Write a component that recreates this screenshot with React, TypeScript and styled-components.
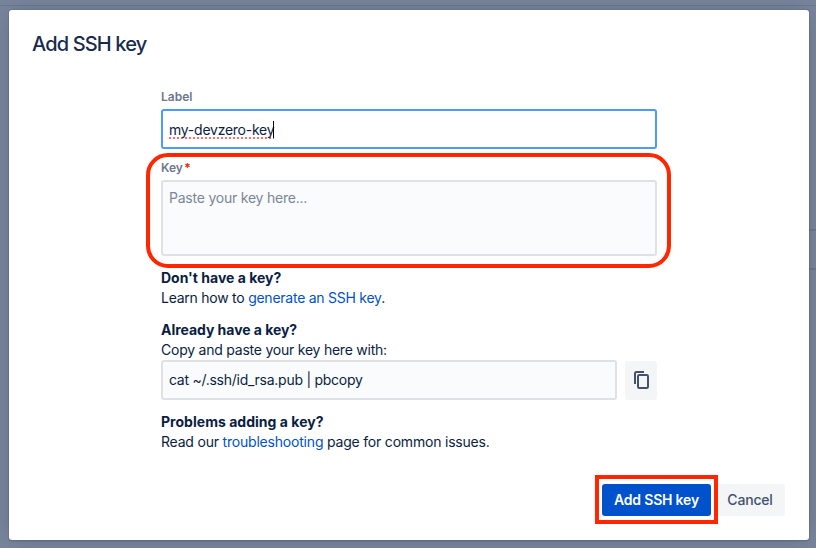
import React from "react";
import styled, { createGlobalStyle } from "styled-components";

const GlobalStyle = createGlobalStyle`
  * { box-sizing: border-box; }
  body {
    margin: 0;
    font-family: Inter, "Liberation Sans", sans-serif;
    font-size: 14px;
    line-height: 20px;
    color: #091e42;
    overflow: hidden;
  }
`;

const Page = styled.div`
  position: relative;
  width: 816px;
  height: 548px;
  padding: 10px 7px 8px 9px;
  background: #77849a;
`;

const PageRule = styled.div<{ $top: number; $left: number; $height: number }>`
  position: absolute;
  top: ${(p) => p.$top}px;
  left: ${(p) => p.$left}px;
  right: 0;
  height: ${(p) => p.$height}px;
  background: #6b7690;
`;

const Dialog = styled.div`
  position: relative;
  display: flex;
  flex-direction: column;
  height: 530px;
  padding: 24px;
  background: #fff;
  border-radius: 3px;
  box-shadow: 0 0 0 1px rgba(9, 30, 66, 0.08), 0 2px 1px rgba(9, 30, 66, 0.08), 0 0 20px -6px rgba(9, 30, 66, 0.31);
`;

const Title = styled.h1`
  margin: 0 0 0 -1px;
  font-size: 20px;
  line-height: 20px;
  font-weight: 500;
  letter-spacing: -0.85px;
  color: #172b4d;
`;

const Form = styled.div`
  width: 496px;
  margin: 35px 0 0 128px;
`;

const FieldLabel = styled.label`
  display: block;
  height: 20px;
  font-size: 12px;
  line-height: 16px;
  font-weight: 600;
  color: #6b778c;
`;

const Required = styled.span`
  padding-left: 1px;
  font-weight: 800;
  color: #de350b;
`;

const TextBox = styled.div<{ $focused?: boolean }>`
  display: flex;
  flex: 1;
  align-items: center;
  height: 40px;
  padding: ${(p) => (p.$focused ? "2px 6px 0" : "0 6px")};
  border: 2px solid ${(p) => (p.$focused ? "#4c9aff" : "#dfe1e6")};
  border-radius: 3px;
  background: ${(p) => (p.$focused ? "#fff" : "#fafbfc")};
`;

const KeyField = styled.div`
  position: relative;
  padding-top: 11px;
`;

const TextArea = styled.div`
  height: 76px;
  padding: 6px;
  border: 2px solid #dfe1e6;
  border-radius: 3px;
  background: #fafbfc;
  color: #7a869a;
`;

const Misspelled = styled.span`
  height: 18px;
  line-height: 17px;
  background: repeating-linear-gradient(90deg, #f8706b 0 2px, transparent 2px 4px) 0 100% / 100% 2px no-repeat;
`;

const Caret = styled.span`
  width: 1px;
  height: 17px;
  margin: -2px 0 0 -1px;
  background: #000;
`;

const Tracked = styled.span<{ $spacing: number }>`
  letter-spacing: ${(p) => p.$spacing}px;
`;

const FieldHighlight = styled.div`
  position: absolute;
  inset: 4px -14px -12px -15px;
  border: 4px solid #ff2600;
  border-radius: 22px;
`;

const Help = styled.section`
  margin-top: 12px;
`;

const HelpTitle = styled.div`
  font-weight: 700;
`;

const Link = styled.a`
  color: #0052cc;
`;

const CommandRow = styled.div`
  display: flex;
  gap: 8px;
`;

const CopyButton = styled.button`
  display: flex;
  align-items: center;
  justify-content: center;
  width: 32px;
  height: 39px;
  margin-top: 1px;
  padding: 0 0 2px 1px;
  border: 0;
  border-radius: 3px;
  background: #f4f5f7;
  color: #42526e;
`;

const Footer = styled.footer`
  display: flex;
  justify-content: flex-end;
  gap: 4px;
  margin-top: auto;
`;

const Button = styled.button<{ $primary?: boolean }>`
  width: ${(p) => (p.$primary ? 109 : 70)}px;
  height: 32px;
  padding: 0;
  border: 0;
  border-radius: 3px;
  font: ${(p) => (p.$primary ? 600 : 500)} 14px/32px Inter, "Liberation Sans", sans-serif;
  white-space: nowrap;
  background: ${(p) => (p.$primary ? "#0052cc" : "#f4f5f7")};
  color: ${(p) => (p.$primary ? "#fff" : "#42526e")};
`;

const Highlighted = styled.div`
  position: relative;
`;

const ButtonHighlight = styled.div`
  position: absolute;
  inset: -9px -7px -8px -7px;
  border: 4px solid #ff2600;
`;

const CopyIcon = () => (
  <svg width="18" height="20" viewBox="0 0 18 20" fill="none" stroke="currentColor" strokeWidth="2">
    <path d="M2 14V3.5Q2 2 3.5 2H11" />
    <rect x="5" y="5" width="10" height="13" rx="1.2" />
  </svg>
);

export default function App() {
  return (
    <>
      <GlobalStyle />
      <Page>
        <PageRule $top={5} $left={0} $height={1} />
        <PageRule $top={229} $left={809} $height={2} />
        <PageRule $top={268} $left={809} $height={2} />
        <Dialog role="dialog">
          <Title>Add SSH key</Title>
          <Form>
            <FieldLabel>Label</FieldLabel>
            <TextBox $focused>
              <Misspelled>
                <Tracked $spacing={-0.25}>my-devzero-key</Tracked>
              </Misspelled>
              <Caret />
            </TextBox>
            <KeyField>
              <FieldLabel>
                Key<Required>*</Required>
              </FieldLabel>
              <TextArea>
                <Tracked $spacing={-0.22}>Paste your key here...</Tracked>
              </TextArea>
              <FieldHighlight />
            </KeyField>
            <Help>
              <HelpTitle>
                <Tracked $spacing={0}>Don't have a key?</Tracked>
              </HelpTitle>
              <Tracked $spacing={-0.25}>
                Learn how to <Link>generate an SSH key</Link>.
              </Tracked>
            </Help>
            <Help>
              <HelpTitle>
                <Tracked $spacing={-0.04}>Already have a key?</Tracked>
              </HelpTitle>
              <Tracked $spacing={-0.23}>Copy and paste your key here with:</Tracked>
              <CommandRow>
                <TextBox>
                  <Tracked $spacing={-0.26}>cat ~/.ssh/id_rsa.pub | pbcopy</Tracked>
                </TextBox>
                <CopyButton aria-label="Copy">
                  <CopyIcon />
                </CopyButton>
              </CommandRow>
            </Help>
            <Help>
              <HelpTitle>
                <Tracked $spacing={0.03}>Problems adding a key?</Tracked>
              </HelpTitle>
              <Tracked $spacing={-0.2}>
                Read our <Link>troubleshooting</Link> page for common issues.
              </Tracked>
            </Help>
          </Form>
          <Footer>
            <Highlighted>
              <Button $primary>
                <Tracked $spacing={-0.2}>Add SSH key</Tracked>
              </Button>
              <ButtonHighlight />
            </Highlighted>
            <Button>
              <Tracked $spacing={-0.2}>Cancel</Tracked>
            </Button>
          </Footer>
        </Dialog>
      </Page>
    </>
  );
}
